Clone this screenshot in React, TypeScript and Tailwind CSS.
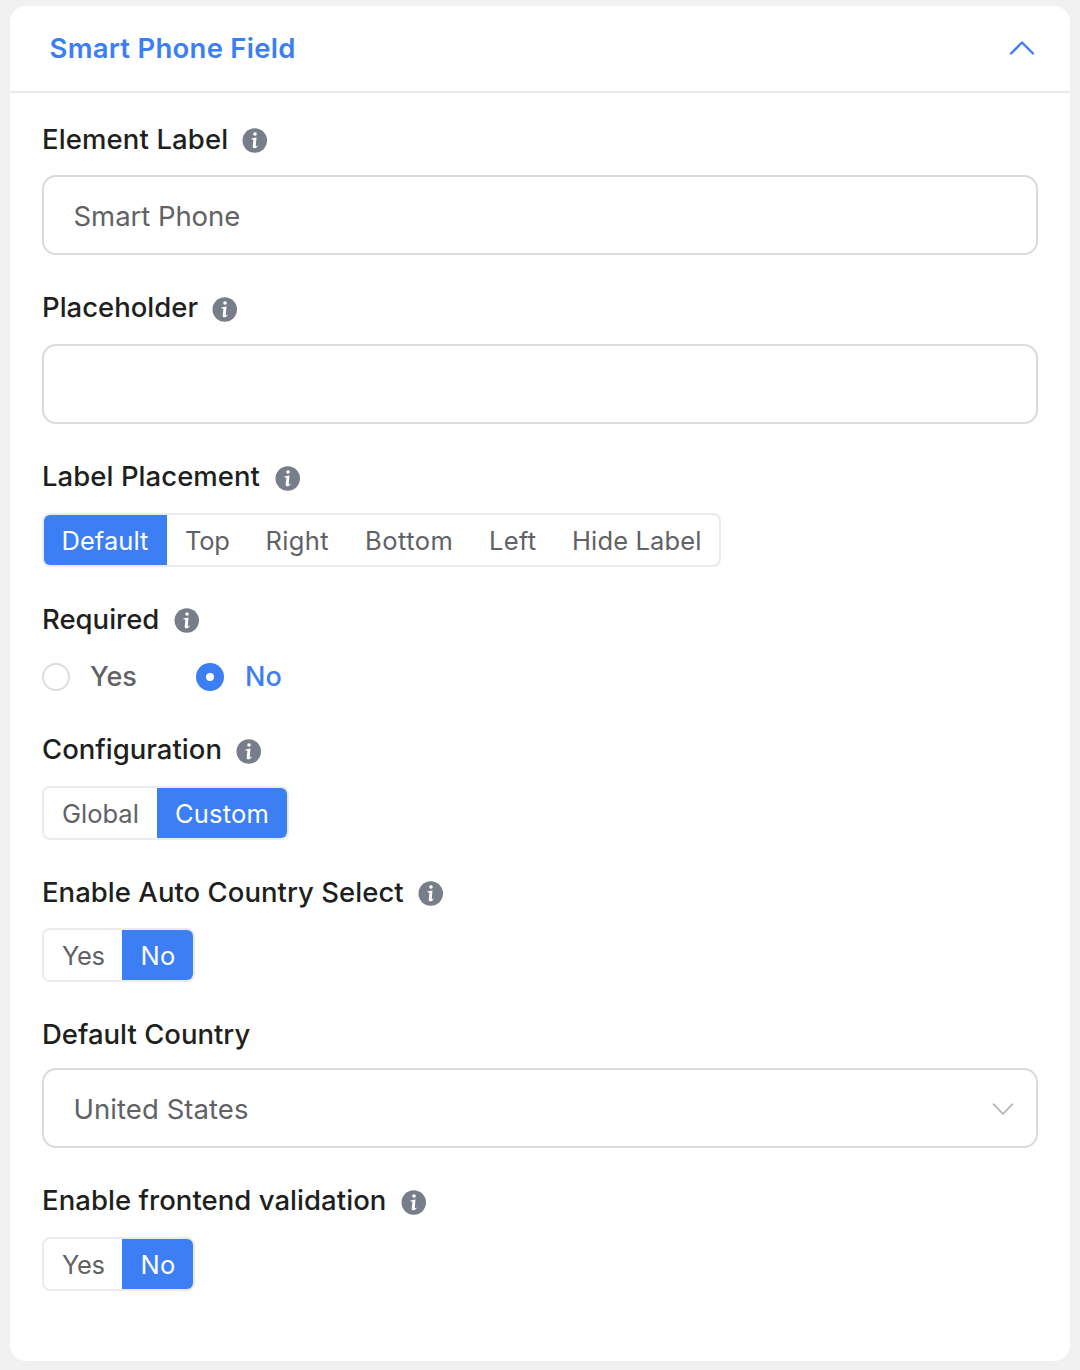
import { useState } from "react";
import type { ReactNode } from "react";

function InfoIcon({ className = "mt-[5px]" }: { className?: string }) {
  return (
    <svg viewBox="0 0 25 25" className={`size-[25px] shrink-0 ${className}`} aria-hidden="true">
      <circle cx="12.75" cy="12.5" r="12.25" fill="#787d8a" />
      <circle cx="13" cy="6" r="1.8" fill="#fff" />
      <path
        d="M9.4 10.5C10.8 10.2 12.4 9.8 14.5 9.5L13.8 17.2C13.7 18.3 14 18.5 14.5 18.2L15.3 17.5L15.7 18C14.8 19.5 13.6 20.3 12.3 20.3C11 20.3 10.6 19.5 10.7 18.2L11.4 12C11.4 11.6 11.1 11.4 10.6 11.4L9.4 11.3Z"
        fill="#fff"
      />
    </svg>
  );
}

function Field({
  label,
  labelClass,
  iconClass,
  info = true,
  className,
  children,
}: {
  label: string;
  labelClass: string;
  iconClass?: string;
  info?: boolean;
  className: string;
  children: ReactNode;
}) {
  return (
    <section className={`flex flex-col items-start ${className}`}>
      <div className="flex h-9 items-center">
        <span className={`whitespace-nowrap text-[27.5px] leading-9 font-medium text-[#1e1f21] ${labelClass}`}>
          {label}
        </span>
        {info && <InfoIcon className={iconClass} />}
      </div>
      {children}
    </section>
  );
}

type Option = { label: string; className: string };

function Segmented({ options, initial }: { options: Option[]; initial: string }) {
  const [value, setValue] = useState(initial);
  return (
    <div className="flex h-[54px] overflow-hidden rounded-lg border-2 border-[#ebebeb]">
      {options.map((o) => (
        <button
          key={o.label}
          onClick={() => setValue(o.label)}
          className={`h-[50px] whitespace-nowrap text-left text-[25.5px] leading-[52px] ${o.className} ${
            value === o.label ? "bg-[#3c7ef3] text-white" : "text-[#606266]"
          }`}
        >
          {o.label}
        </button>
      ))}
    </div>
  );
}

const placements: Option[] = [
  { label: "Default", className: "w-[123px] pl-[17.5px] tracking-[0.05px]" },
  { label: "Top", className: "w-[80px] pl-[18px] tracking-[-0.3px]" },
  { label: "Right", className: "w-[100px] pl-[18.5px] tracking-[0.35px]" },
  { label: "Bottom", className: "w-[124px] pl-[18px] tracking-[0.5px]" },
  { label: "Left", className: "w-[83px] pl-[18px] tracking-[0.3px]" },
  { label: "Hide Label", className: "w-[165px] pl-[18px] tracking-[0.15px]" },
];
const configurations: Option[] = [
  { label: "Global", className: "w-[113px] pl-[18px]" },
  { label: "Custom", className: "w-[130px] pl-[18px] tracking-[0.2px]" },
];
const yesNo: Option[] = [
  { label: "Yes", className: "w-[78px] pl-[18px] tracking-[-0.4px]" },
  { label: "No", className: "w-[71px] pl-[18.5px] tracking-[0.2px]" },
];

export default function App() {
  const [required, setRequired] = useState(false);
  return (
    <div className="flex h-[1370px] w-[1080px] flex-col bg-[#f1f1f1] px-[10px] pt-[6px] font-['Inter',sans-serif]">
      <main className="h-[1355px] rounded-2xl bg-white">
        <header className="flex h-[87px] items-center justify-between border-b-2 border-[#ebebeb] pr-[35px] pl-[39.5px]">
          <h1 className="-mt-0.5 text-[27.5px] leading-9 font-semibold tracking-[0.25px] text-[#3c7ef3]">Smart Phone Field</h1>
          <svg viewBox="0 0 26 16" className="-mt-0.5 h-4 w-[26px]" fill="none" stroke="#3c7ef3" strokeWidth="2.4" strokeLinecap="round" strokeLinejoin="round">
            <path d="M2 13.5L13 2.5L24 13.5" />
          </svg>
        </header>
        <div className="flex flex-col px-8 pt-7">
          <Field label="Element Label" labelClass="w-[200px] tracking-[0.12px]" iconClass="mt-[3px]" className="gap-[18px]">
            <input
              defaultValue="Smart Phone"
              className="h-20 w-full rounded-[14px] border-2 border-[#dadbdd] px-[29.5px] pt-0.5 text-[27.5px] tracking-[-0.05px] text-[#606266] outline-none"
            />
          </Field>
          <Field label="Placeholder" labelClass="w-[170px]" className="mt-[34px] gap-[19px]">
            <input className="h-20 w-full rounded-[14px] border-2 border-[#dadbdd] px-[29.5px] pt-0.5 text-[27.5px] text-[#606266] outline-none" />
          </Field>
          <Field label="Label Placement" labelClass="w-[233px] tracking-[0.05px]" className="mt-[34px] gap-[19px]">
            <Segmented options={placements} initial="Default" />
          </Field>
          <Field label="Required" labelClass="w-[132px]" iconClass="mt-[3px]" className="mt-[34px] gap-[26px]">
            <div className="flex h-7 items-center text-[27px] leading-7 font-medium">
              <button onClick={() => setRequired(true)} className="flex w-[154px] items-center gap-5">
                <span className={`flex size-7 items-center justify-center rounded-full ${required ? "bg-[#3c7ef3]" : "border-2 border-[#dcdfe0]"}`}>
                  {required && <span className="size-2 rounded-full bg-white" />}
                </span>
                <span className={required ? "text-[#3c7ef3]" : "text-[#606266]"}>Yes</span>
              </button>
              <button onClick={() => setRequired(false)} className="flex items-center gap-[21px]">
                <span className={`flex size-7 items-center justify-center rounded-full ${required ? "border-2 border-[#dcdfe0]" : "bg-[#3c7ef3]"}`}>
                  {!required && <span className="size-2 rounded-full bg-white" />}
                </span>
                <span className={required ? "text-[#606266]" : "text-[#3c7ef3]"}>No</span>
              </button>
            </div>
          </Field>
          <Field label="Configuration" labelClass="w-[194px]" className="mt-10 gap-[19px]">
            <Segmented options={configurations} initial="Custom" />
          </Field>
          <Field label="Enable Auto Country Select" labelClass="w-[376px] tracking-[0.03px]" iconClass="mt-[3px]" className="mt-[34px] gap-[18px]">
            <Segmented options={yesNo} initial="No" />
          </Field>
          <Field label="Default Country" labelClass="" info={false} className="mt-[34px] gap-4">
            <button className="flex h-20 w-full items-center justify-between rounded-[14px] border-2 border-[#dadbdd] pt-[3px] pr-[21px] pl-[29.5px] text-[27.5px] tracking-[0.06px] text-[#606266]">
              <span>United States</span>
              <svg viewBox="0 0 24 14" className="-mt-px h-[14px] w-6" fill="none" stroke="#aeb1b8" strokeWidth="1.7" strokeLinecap="round" strokeLinejoin="round">
                <path d="M2.5 2.2L12 12L21.5 2.2" />
              </svg>
            </button>
          </Field>
          <Field label="Enable frontend validation" labelClass="w-[359px] tracking-[0.05px]" className="mt-[34px] gap-[19px]">
            <Segmented options={yesNo} initial="No" />
          </Field>
        </div>
      </main>
    </div>
  );
}
